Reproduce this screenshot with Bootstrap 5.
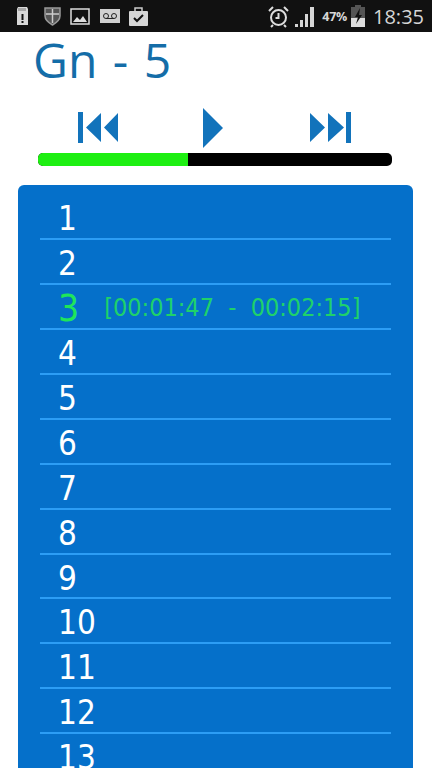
<!DOCTYPE html>
<html lang="en"><head><meta charset="utf-8">
<link href="https://cdn.jsdelivr.net/npm/bootstrap@5.3.0/dist/css/bootstrap.min.css" rel="stylesheet">
<style>
html,body{height:768px;overflow:hidden;background:#fff}
.stat-bar{height:32px;background:#111;color:#d6d6d6;padding:0 0 0 16px}
.stat-left{gap:9.500px}
.stat-left svg:nth-child(2){margin-left:5px}
.stat-right{margin-left:auto;padding-right:8px}
.stat-alarm{margin-right:6px}
.stat-pct{font:700 12.500px "Open Sans",sans-serif;margin:0 4px 0 7px;letter-spacing:-.3px}
.stat-time{font:400 20px "Open Sans",sans-serif;margin-left:8px}
.page-title{font:500 48px/1 "Open Sans",sans-serif;color:#146da8;margin:0;padding:4px 0 0 33px;height:70px;word-spacing:3px}
.ctrl-row{height:51px;padding:0 0 0 77px}
.ctrl-prev{width:126px}.ctrl-play{width:106px}
.track{height:13px;margin:0 40px 0 38px;background:#000;border-radius:5px;--bs-progress-bar-bg:#1eef12}
.track .progress-bar{width:42.3%}
.song-box{margin:19px 19px 0 18px;height:600px;background:#0570ca;border-radius:6px;padding:10px 22px 0 22px}
.song-row{height:44.95px;border-bottom:2px solid #2c9df5;padding:2px 0 0 18px;color:#fff;font:400 33px/44px "DejaVu Sans Condensed","DejaVu Sans",sans-serif;white-space:nowrap}
.song-row.now{color:#1fe55a}
.song-row.now b{font-weight:400;font-size:37px}
.song-time{font:400 25px/44px "DejaVu Sans Condensed","DejaVu Sans",sans-serif;color:#1fd16a;margin:-1px 0 0 25px;white-space:pre}
</style></head><body>
<div class="stat-bar d-flex align-items-center">
 <div class="d-flex align-items-center stat-left">
  <svg width="13" height="20" viewBox="0 0 13 20"><path d="M2 1h9l1 2v16H1V3z" fill="#d8d8d8"/><rect x="5.500" y="8" width="2" height="6" fill="#111"/><rect x="5.500" y="15" width="2" height="2" fill="#111"/><path d="M3 2v3M5 2v3M7 2v3M9 2v3" stroke="#777"/></svg>
  <svg width="17" height="20" viewBox="0 0 17 20"><path d="M1 2h15v8c0 4-4 7-7.500 9C5 17 1 14 1 10z" fill="#555" stroke="#999" stroke-width="1.500"/><path d="M8.500 3v14M2 8h13" stroke="#ccc" stroke-width="1.500"/></svg>
  <svg width="20" height="17" viewBox="0 0 20 17"><rect x="1" y="1" width="18" height="15" fill="#111" stroke="#ddd" stroke-width="1.500"/><path d="M3 14l4-5 3 3 3-4 4 6z" fill="#ddd"/></svg>
  <svg width="20" height="14" viewBox="0 0 20 14"><rect width="20" height="14" fill="#d0d0d0"/><circle cx="6" cy="7" r="2.500" fill="none" stroke="#222"/><circle cx="14" cy="7" r="2.500" fill="none" stroke="#222"/><path d="M6 9.500h8" stroke="#222"/></svg>
  <svg width="19" height="19" viewBox="0 0 19 19"><path d="M6 4V1h7v3" fill="none" stroke="#ccc" stroke-width="1.500"/><rect y="4" width="19" height="15" rx="1" fill="#d6d6d6"/><path d="M5 11l3 3 6-6" fill="none" stroke="#111" stroke-width="2"/></svg>
 </div>
 <div class="d-flex align-items-center stat-right">
  <svg class="stat-alarm" width="21" height="23" viewBox="0 0 21 23"><circle cx="10.500" cy="12.500" r="7.500" fill="none" stroke="#ddd" stroke-width="2"/><path d="M10.500 8v5l-3 0M1 6l4-4M20 6l-4-4M5 20l-2 2M16 20l2 2" fill="none" stroke="#ddd" stroke-width="2"/></svg>
  <svg width="20" height="21" viewBox="0 0 20 21"><path d="M0 21v-3h3v3zM5 21v-7h3v7zM10 21V8h3v13zM15 21V1h4v20z" fill="#d6d6d6"/></svg>
  <span class="stat-pct">47%</span>
  <svg width="14" height="22" viewBox="0 0 14 22"><path d="M4 0h6v2h4v20H0V2h4z" fill="#555"/><path d="M0 13h14v9H0z" fill="#ddd"/><path d="M9 3l-5 9h3l-2 7 6-9H8z" fill="#111"/></svg>
  <span class="stat-time">18:35</span>
 </div>
</div>
<h1 class="page-title">Gn - 5</h1>
<div class="ctrl-row d-flex align-items-center">
 <div class="ctrl-prev d-flex"><svg width="42" height="31" viewBox="0 0 42 31"><path d="M1 0h5v31H1zM9 15.500L24 1v29zM27 15.500L41 1v29z" fill="#1273bb"/></svg></div>
 <div class="ctrl-play d-flex"><svg width="20" height="40" viewBox="0 0 20 40"><path d="M0 0l20 20L0 40z" fill="#1273bb"/></svg></div>
 <div class="d-flex"><svg width="42" height="31" viewBox="0 0 42 31"><path d="M42 0h-5v31h5zM35 15.500L19 1v29zM16 15.500L1 1v29z" fill="#1273bb"/></svg></div>
</div>
<div class="progress track"><div class="progress-bar"></div></div>
<div class="song-box">
 <div class="song-row">1</div>
 <div class="song-row">2</div>
 <div class="song-row now d-flex"><b>3</b><span class="song-time">[00:01:47  -  00:02:15]</span></div>
 <div class="song-row">4</div>
 <div class="song-row">5</div>
 <div class="song-row">6</div>
 <div class="song-row">7</div>
 <div class="song-row">8</div>
 <div class="song-row">9</div>
 <div class="song-row">10</div>
 <div class="song-row">11</div>
 <div class="song-row">12</div>
 <div class="song-row">13</div>
</div>
<script src="https://cdn.jsdelivr.net/npm/bootstrap@5.3.0/dist/js/bootstrap.bundle.min.js"></script>
</body></html>
